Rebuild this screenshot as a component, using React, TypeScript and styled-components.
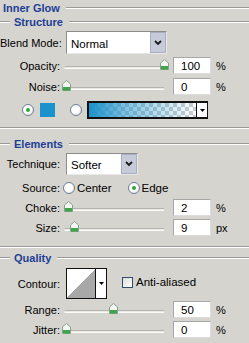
import React from "react";
import styled, { createGlobalStyle } from "styled-components";

const Global = createGlobalStyle`
  html, body { margin: 0; padding: 0; background: #d6d4cf; }
  body { font-family: "Liberation Sans", Arial, sans-serif; font-size: 11px; color: #000; }
`;

const Panel = styled.div`
  width: 249px;
  height: 343px;
  overflow: hidden;
  display: flex;
  flex-direction: column;
  background: #d6d4cf;
`;

const Etched = styled.div<{ $w?: number }>`
  height: 2px;
  border-top: 1px solid #9c9a96;
  border-bottom: 1px solid #ffffff;
  box-sizing: border-box;
  flex: ${(p) => (p.$w ? `0 0 ${p.$w}px` : "1 1 auto")};
`;

const TitleRow = styled.div<{ $h: number; $mt?: number; $indent?: number }>`
  display: flex;
  align-items: center;
  height: ${(p) => p.$h}px;
  margin-top: ${(p) => p.$mt ?? 0}px;
  padding-left: ${(p) => p.$indent ?? 0}px;
  gap: 4px;
`;

const TitleText = styled.span`
  font-weight: bold;
  color: #1d3f96;
  font-size: 11px;
  margin-right: 2px;
  white-space: nowrap;
`;

const Row = styled.div<{ $h: number; $mt: number; $gap?: number }>`
  display: grid;
  grid-template-columns: 60px auto;
  column-gap: ${(p) => p.$gap ?? 6}px;
  align-items: center;
  height: ${(p) => p.$h}px;
  margin-top: ${(p) => p.$mt}px;
`;

const Label = styled.span`
  text-align: right;
  white-space: nowrap;
`;

const Controls = styled.div`
  display: flex;
  align-items: center;
`;

const SelectBox = styled.div<{ $w: number; $h: number }>`
  width: ${(p) => p.$w}px;
  height: ${(p) => p.$h}px;
  box-sizing: border-box;
  border: 1px solid #8c8c8c;
  border-right-color: #e8e8e8;
  border-bottom-color: #e8e8e8;
  background: #fff;
  display: flex;
  align-items: center;
`;

const SelectText = styled.span`
  flex: 1;
  padding-left: 4px;
  padding-top: 2px;
  font-size: 11.5px;
`;

const SelectButton = styled.div`
  width: 16px;
  height: 100%;
  box-sizing: border-box;
  background: #c7cbd9;
  border: 1px solid #a9afc2;
  display: flex;
  align-items: center;
  justify-content: center;
`;

const SliderWrap = styled.div`
  position: relative;
  width: 111px;
  height: 100%;
  flex: 0 0 111px;
`;

const Track = styled.div`
  position: absolute;
  left: 2px;
  width: 100px;
  top: 50%;
  margin-top: 0px;
  height: 3px;
  box-sizing: border-box;
  border-top: 1px solid #b5b3ae;
  border-bottom: 1px solid #fbfbfa;
  background: #e9e8e4;
  border-radius: 2px 0 0 2px;
`;

const ThumbBox = styled.div`
  position: absolute;
  top: 50%;
  margin-top: -7px;
  width: 9px;
  height: 11px;
  margin-left: -4px;
`;

const NumInput = styled.div`
  width: 38px;
  height: 17px;
  box-sizing: border-box;
  border: 1px solid #a7a7a7;
  border-right-color: #dcdcdc;
  border-bottom-color: #dcdcdc;
  background: #fff;
  padding-left: 7px;
  display: flex;
  align-items: center;
  font-size: 11.5px;
  padding-top: 1px;
`;

const Unit = styled.span`
  margin-left: 5px;
  font-size: 11px;
`;

const ColorRow = styled.div`
  display: flex;
  align-items: center;
  height: 18px;
  margin-top: 6px;
  padding-left: 22px;
`;

const RadioCircle = styled.div<{ $on?: boolean }>`
  width: 12px;
  height: 12px;
  box-sizing: border-box;
  border-radius: 50%;
  border: 1px solid #6f7f96;
  background: radial-gradient(circle at 40% 40%, #ffffff 40%, #dcdcd6 100%);
  display: flex;
  align-items: center;
  justify-content: center;
  flex: 0 0 12px;
  &::after {
    content: "";
    display: ${(p) => (p.$on ? "block" : "none")};
    width: 4px;
    height: 4px;
    border-radius: 50%;
    background: #2fa83a;
  }
`;

const Swatch = styled.div`
  width: 15px;
  height: 14px;
  background: #1b92cb;
  margin-left: 6px;
`;

const GradientBox = styled.div`
  margin-left: 5px;
  width: 121px;
  height: 18px;
  box-sizing: border-box;
  border: 2px solid #111;
  border-right-width: 1px;
  display: flex;
  background: #fff;
`;

const GradientFill = styled.div`
  flex: 1;
  background:
    linear-gradient(to right, #1b92cb 0%, rgba(27, 146, 203, 0.55) 35%, rgba(27, 146, 203, 0) 100%),
    repeating-conic-gradient(#c9cdd0 0% 25%, #ffffff 0% 50%) 0 0 / 8px 8px;
`;

const ArrowCell = styled.div`
  width: 10px;
  border-left: 1px solid #111;
  background: #fff;
  display: flex;
  align-items: center;
  justify-content: center;
`;

const SourceOptions = styled.div`
  display: flex;
  align-items: center;
  margin-left: -3px;
`;

const RadioLabel = styled.span<{ $mr?: number }>`
  margin-left: 2px;
  margin-right: ${(p) => p.$mr ?? 0}px;
  font-size: 11.5px;
`;

const ContourBox = styled.div`
  width: 41px;
  height: 31px;
  box-sizing: border-box;
  border: 1px solid #111;
  display: flex;
  background: #fff;
`;

const ContourCurve = styled.div`
  flex: 1;
  background: linear-gradient(to top left, #a8a8a8 50%, #ffffff 50%);
`;

const Check = styled.div`
  width: 11px;
  height: 11px;
  box-sizing: border-box;
  border: 1px solid #35496e;
  background: linear-gradient(135deg, #dcdcd7, #ffffff);
  margin-left: 15px;
  margin-top: -3px;
`;

const CheckLabel = styled.span`
  margin-left: 3px;
  margin-top: -3px;
  font-size: 11.5px;
`;

const Thumb = () => (
  <svg width="9" height="11" viewBox="0 0 9 11">
    <path d="M4.5 0.5 L8.5 4 L8.5 10.5 L0.5 10.5 L0.5 4 Z" fill="#f3f5f2" stroke="#8aa08c" strokeWidth="1" />
    <rect x="1" y="7" width="7" height="3.5" fill="#3ea54b" />
  </svg>
);

const Chevron = () => (
  <svg width="8" height="6" viewBox="0 0 8 6">
    <path d="M1 1 L4 4 L7 1" fill="none" stroke="#1a1a1a" strokeWidth="1.8" />
  </svg>
);

const Tri = () => (
  <svg width="5" height="3" viewBox="0 0 5 3">
    <path d="M0 0 L5 0 L2.5 3 Z" fill="#000" />
  </svg>
);

type SliderRowProps = { label: string; value: string; unit: string; pos: number; mt: number };

const SliderRow = ({ label, value, unit, pos, mt }: SliderRowProps) => (
  <Row $h={17} $mt={mt} $gap={2}>
    <Label>{label}</Label>
    <Controls>
      <SliderWrap>
        <Track />
        <ThumbBox style={{ left: `${4 + pos * 98}px` }}>
          <Thumb />
        </ThumbBox>
      </SliderWrap>
      <NumInput>{value}</NumInput>
      <Unit>{unit}</Unit>
    </Controls>
  </Row>
);

const Legend = ({ text, h, mt }: { text: string; h: number; mt: number }) => (
  <TitleRow $h={h} $mt={mt}>
    <Etched $w={10} />
    <TitleText>{text}</TitleText>
    <Etched />
  </TitleRow>
);

export default function App() {
  return (
    <Panel>
      <Global />
      <TitleRow $h={15} $indent={3}>
        <TitleText>Inner Glow</TitleText>
        <Etched />
      </TitleRow>
      <Legend text="Structure" h={14} mt={0} />
      <Row $h={23} $mt={2}>
        <Label>Blend Mode:</Label>
        <SelectBox $w={101} $h={23}>
          <SelectText>Normal</SelectText>
          <SelectButton>
            <Chevron />
          </SelectButton>
        </SelectBox>
      </Row>
      <SliderRow label="Opacity:" value="100" unit="%" pos={1} mt={3} />
      <SliderRow label="Noise:" value="0" unit="%" pos={0} mt={4} />
      <ColorRow>
        <RadioCircle $on />
        <Swatch />
        <RadioCircle style={{ marginLeft: 15 }} />
        <GradientBox>
          <GradientFill />
          <ArrowCell>
            <Tri />
          </ArrowCell>
        </GradientBox>
      </ColorRow>
      <TitleRow $h={2} $mt={8}>
        <Etched />
      </TitleRow>
      <Legend text="Elements" h={14} mt={8} />
      <Row $h={22} $mt={2}>
        <Label>Technique:</Label>
        <SelectBox $w={72} $h={22}>
          <SelectText>Softer</SelectText>
          <SelectButton>
            <Chevron />
          </SelectButton>
        </SelectBox>
      </Row>
      <Row $h={13} $mt={6}>
        <Label>Source:</Label>
        <SourceOptions>
          <RadioCircle />
          <RadioLabel $mr={16}>Center</RadioLabel>
          <RadioCircle $on />
          <RadioLabel>Edge</RadioLabel>
        </SourceOptions>
      </Row>
      <SliderRow label="Choke:" value="2" unit="%" pos={0.02} mt={5} />
      <SliderRow label="Size:" value="9" unit="px" pos={0.08} mt={3} />
      <TitleRow $h={2} $mt={10}>
        <Etched />
      </TitleRow>
      <Legend text="Quality" h={14} mt={3} />
      <Row $h={31} $mt={3}>
        <Label>Contour:</Label>
        <Controls>
          <ContourBox>
            <ContourCurve />
            <ArrowCell>
              <Tri />
            </ArrowCell>
          </ContourBox>
          <Check />
          <CheckLabel>Anti-aliased</CheckLabel>
        </Controls>
      </Row>
      <SliderRow label="Range:" value="50" unit="%" pos={0.48} mt={2} />
      <SliderRow label="Jitter:" value="0" unit="%" pos={0} mt={3} />
    </Panel>
  );
}
